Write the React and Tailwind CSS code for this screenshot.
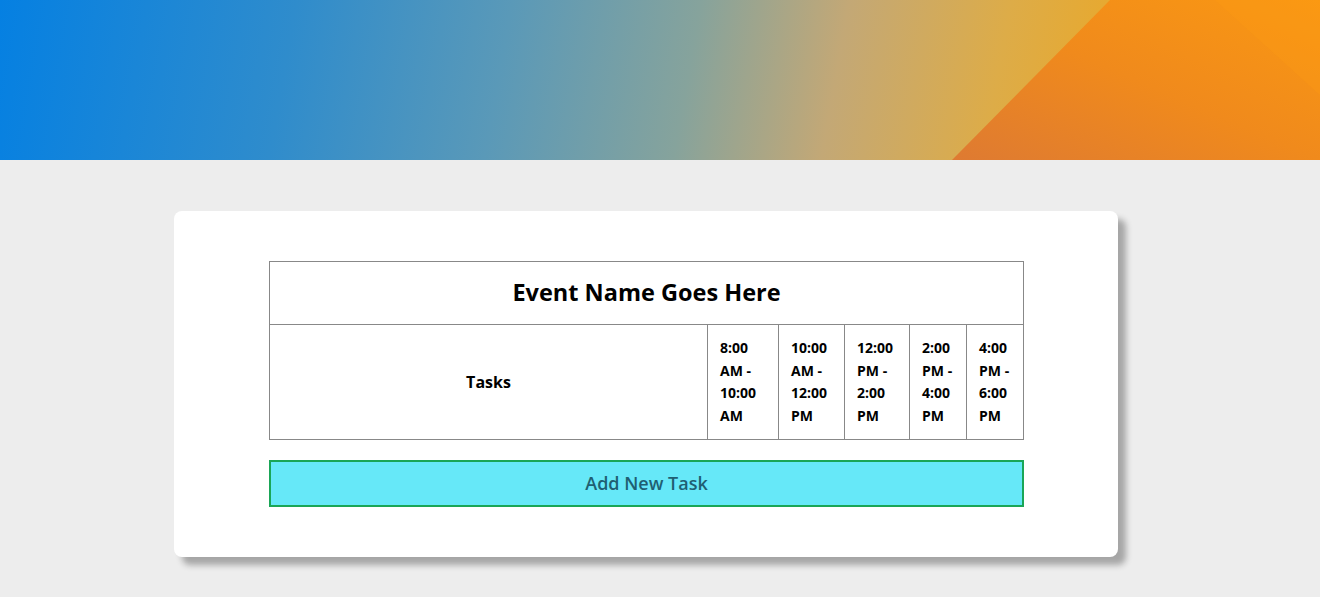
export default function App() {
  const slots = [
    { label: '8:00 AM - 10:00 AM', w: 'w-[71px]' },
    { label: '10:00 AM - 12:00 PM', w: 'w-[66px]' },
    { label: '12:00 PM - 2:00 PM', w: 'w-[65px]' },
    { label: '2:00 PM - 4:00 PM', w: 'w-[57px]' },
    { label: '4:00 PM - 6:00 PM', w: 'w-[57px]' },
  ];

  return (
    <div className="min-h-[597px] bg-[#ededed] font-['Open_Sans',sans-serif] overflow-hidden">
      <div className="relative h-[160px] overflow-hidden bg-[linear-gradient(100deg,#0580e2_0%,#2f8ccc_22%,#5a99b8_38%,#86a39c_52%,#c3a876_63%,#ddac48_75%,#eaa828_85%)]">
        <svg className="absolute inset-0 w-full h-full" viewBox="0 0 1320 160" preserveAspectRatio="none">
          <defs>
            <linearGradient id="og" x1="0" y1="1" x2="1" y2="0">
              <stop offset="0" stopColor="#de7a32" />
              <stop offset="0.5" stopColor="#f08a1c" />
              <stop offset="1" stopColor="#fa9812" />
            </linearGradient>
          </defs>
          <polygon points="952,160 1110,0 1320,0 1320,160" fill="url(#og)" />
          <polygon points="1215,0 1320,0 1320,95" fill="#fb9c14" opacity="0.35" />
        </svg>
      </div>

      <div className="ml-[174px] mt-[51px] w-[944px] bg-white rounded-lg shadow-[8px_8px_6px_rgba(0,0,0,0.3)] px-[95px] py-[50px]">
        <table className="w-[755px] border-collapse table-fixed text-black">
          <colgroup>
            <col className="w-[438px]" />
            {slots.map((s) => (
              <col key={s.label} className={s.w} />
            ))}
          </colgroup>
          <thead>
            <tr>
              <th colSpan={6} className="h-[63px] border border-[#888] text-[23.5px] font-bold">
                Event Name Goes Here
              </th>
            </tr>
          </thead>
          <tbody>
            <tr>
              <th className="h-[115px] border border-[#888] text-[16px] font-bold">Tasks</th>
              {slots.map((s) => (
                <th
                  key={s.label}
                  className="border border-[#888] pl-3 pr-1 text-left text-[14px] leading-[22.5px] font-bold"
                >
                  {s.label}
                </th>
              ))}
            </tr>
          </tbody>
        </table>

        <button className="mt-[20px] w-[755px] h-[47px] bg-[#66e8f8] border-2 border-[#1aa657] text-[#1f5f72] text-[18px] font-semibold">
          Add New Task
        </button>
      </div>
    </div>
  );
}
